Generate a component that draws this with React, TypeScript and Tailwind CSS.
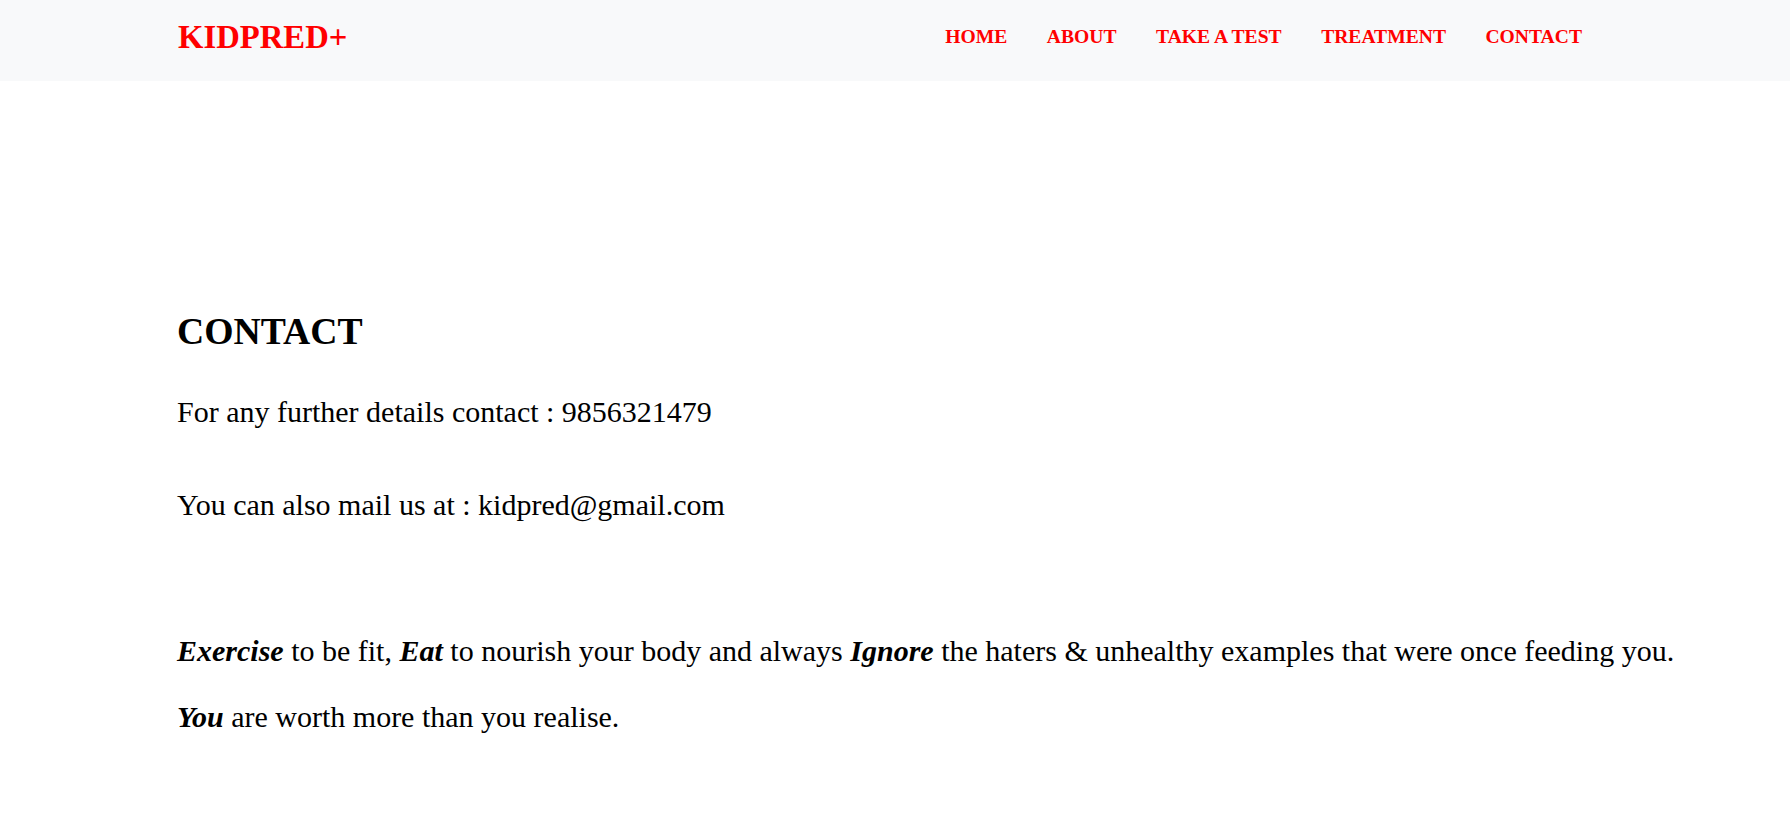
import React from "react";

const links = ["HOME", "ABOUT", "TAKE A TEST", "TREATMENT", "CONTACT"];

function Navbar() {
  return (
    <header className="bg-[#f8f9fa] h-[81px]">
      <div className="flex items-center h-full pb-[8px] pl-[178px] pr-[208px]">
        <a href="#" className="text-[32.7px] leading-[40px] font-bold text-[#ff0000]">
          KIDPRED+
        </a>
        <nav className="ml-auto pt-[2px]">
          <ul className="flex items-center gap-[39.5px]">
            {links.map((l) => (
              <li key={l}>
                <a href="#" className="text-[19.6px] leading-[24px] font-bold text-[#ff0000]">
                  {l}
                </a>
              </li>
            ))}
          </ul>
        </nav>
      </div>
    </header>
  );
}

export default function App() {
  return (
    <div className="min-h-screen bg-white text-black font-['Liberation_Serif','Times_New_Roman',serif]">
      <Navbar />
      <main className="pl-[177px] pr-[40px] pt-[228px] pb-[60px]">
        <h2 className="text-[37.7px] leading-[44px] font-bold">CONTACT</h2>
        <p className="mt-[41px] text-[30px] leading-[36px]">
          For any further details contact : 9856321479
        </p>
        <p className="mt-[57px] text-[30px] leading-[36px]">
          You can also mail us at : kidpred@gmail.com
        </p>
        <p className="mt-[110px] text-[30px] leading-[36px]">
          <b className="italic">Exercise</b> to be fit, <b className="italic">Eat</b> to nourish your body and always{" "}
          <b className="italic">Ignore</b> the haters &amp; unhealthy examples that were once feeding you.
        </p>
        <p className="mt-[30px] text-[30px] leading-[36px]">
          <b className="italic">You</b> are worth more than you realise.
        </p>
      </main>
    </div>
  );
}
